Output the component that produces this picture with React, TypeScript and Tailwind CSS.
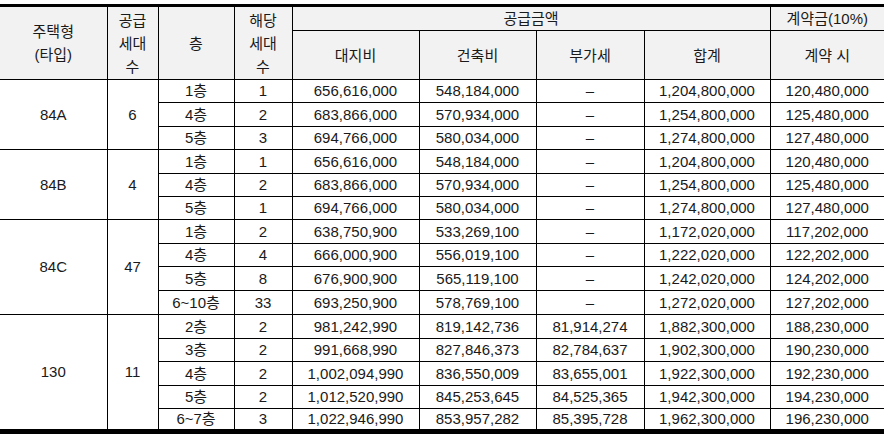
type Row = {
  floor: string;
  units: string;
  land: string;
  build: string;
  vat: string;
  total: string;
  deposit: string;
};

type Group = {
  type: string;
  supply: string;
  rows: Row[];
};

const groups: Group[] = [
  {
    type: "84A",
    supply: "6",
    rows: [
      { floor: "1층", units: "1", land: "656,616,000", build: "548,184,000", vat: "–", total: "1,204,800,000", deposit: "120,480,000" },
      { floor: "4층", units: "2", land: "683,866,000", build: "570,934,000", vat: "–", total: "1,254,800,000", deposit: "125,480,000" },
      { floor: "5층", units: "3", land: "694,766,000", build: "580,034,000", vat: "–", total: "1,274,800,000", deposit: "127,480,000" },
    ],
  },
  {
    type: "84B",
    supply: "4",
    rows: [
      { floor: "1층", units: "1", land: "656,616,000", build: "548,184,000", vat: "–", total: "1,204,800,000", deposit: "120,480,000" },
      { floor: "4층", units: "2", land: "683,866,000", build: "570,934,000", vat: "–", total: "1,254,800,000", deposit: "125,480,000" },
      { floor: "5층", units: "1", land: "694,766,000", build: "580,034,000", vat: "–", total: "1,274,800,000", deposit: "127,480,000" },
    ],
  },
  {
    type: "84C",
    supply: "47",
    rows: [
      { floor: "1층", units: "2", land: "638,750,900", build: "533,269,100", vat: "–", total: "1,172,020,000", deposit: "117,202,000" },
      { floor: "4층", units: "4", land: "666,000,900", build: "556,019,100", vat: "–", total: "1,222,020,000", deposit: "122,202,000" },
      { floor: "5층", units: "8", land: "676,900,900", build: "565,119,100", vat: "–", total: "1,242,020,000", deposit: "124,202,000" },
      { floor: "6~10층", units: "33", land: "693,250,900", build: "578,769,100", vat: "–", total: "1,272,020,000", deposit: "127,202,000" },
    ],
  },
  {
    type: "130",
    supply: "11",
    rows: [
      { floor: "2층", units: "2", land: "981,242,990", build: "819,142,736", vat: "81,914,274", total: "1,882,300,000", deposit: "188,230,000" },
      { floor: "3층", units: "2", land: "991,668,990", build: "827,846,373", vat: "82,784,637", total: "1,902,300,000", deposit: "190,230,000" },
      { floor: "4층", units: "2", land: "1,002,094,990", build: "836,550,009", vat: "83,655,001", total: "1,922,300,000", deposit: "192,230,000" },
      { floor: "5층", units: "2", land: "1,012,520,990", build: "845,253,645", vat: "84,525,365", total: "1,942,300,000", deposit: "194,230,000" },
      { floor: "6~7층", units: "3", land: "1,022,946,990", build: "853,957,282", vat: "85,395,728", total: "1,962,300,000", deposit: "196,230,000" },
    ],
  },
];

// row heights so the lines land where the original has them
const heights = [
  ["h-[23px]", "h-[24px]", "h-[23px]"],
  ["h-[24px]", "h-[23px]", "h-[23px]"],
  ["h-[24px]", "h-[23px]", "h-[24px]", "h-[24px]"],
  ["h-[24px]", "h-[23px]", "h-[24px]", "h-[23px]", "h-[23px]"],
];

const cell = "border border-black text-center align-middle p-0";

const App = () => {
  return (
    <div className="w-[884px] h-[438px] bg-white pt-[4px] overflow-hidden">
      <table
        className="w-[884px] table-fixed border-collapse border-t-[3px] border-b-[5px] border-black text-[15px] text-[#1a1a1a]"
        style={{ fontFamily: '"Liberation Sans", "Noto Sans CJK KR", sans-serif' }}
      >
        <colgroup>
          <col className="w-[107px]" />
          <col className="w-[51px]" />
          <col className="w-[76px]" />
          <col className="w-[58px]" />
          <col className="w-[127px]" />
          <col className="w-[117px]" />
          <col className="w-[108px]" />
          <col className="w-[126px]" />
          <col className="w-[114px]" />
        </colgroup>
        <thead className="bg-[#f2f2f2] leading-[23px]">
          <tr className="h-[23px]">
            <th rowSpan={2} className={`${cell} border-l-0 font-normal`}>
              주택형
              <br />
              (타입)
            </th>
            <th rowSpan={2} className={`${cell} font-normal`}>
              공급
              <br />
              세대
              <br />수
            </th>
            <th rowSpan={2} className={`${cell} font-normal`}>
              층
            </th>
            <th rowSpan={2} className={`${cell} font-normal`}>
              해당
              <br />
              세대
              <br />수
            </th>
            <th colSpan={4} className={`${cell} font-normal`}>
              공급금액
            </th>
            <th className={`${cell} border-r-0 font-normal`}>계약금(10%)</th>
          </tr>
          <tr className="h-[49px]">
            <th className={`${cell} font-normal`}>대지비</th>
            <th className={`${cell} font-normal`}>건축비</th>
            <th className={`${cell} font-normal`}>부가세</th>
            <th className={`${cell} font-normal`}>합계</th>
            <th className={`${cell} border-r-0 font-normal`}>계약 시</th>
          </tr>
        </thead>
        <tbody className="leading-[18px]">
          {groups.map((g, gi) =>
            g.rows.map((r, ri) => (
              <tr key={g.type + r.floor} className={heights[gi][ri]}>
                {ri === 0 && (
                  <>
                    <td rowSpan={g.rows.length} className={`${cell} border-l-0`}>
                      {g.type}
                    </td>
                    <td rowSpan={g.rows.length} className={cell}>
                      {g.supply}
                    </td>
                  </>
                )}
                <td className={cell}>{r.floor}</td>
                <td className={cell}>{r.units}</td>
                <td className={cell}>{r.land}</td>
                <td className={cell}>{r.build}</td>
                <td className={cell}>{r.vat}</td>
                <td className={cell}>{r.total}</td>
                <td className={`${cell} border-r-0`}>{r.deposit}</td>
              </tr>
            ))
          )}
        </tbody>
      </table>
    </div>
  );
};

export default App;
